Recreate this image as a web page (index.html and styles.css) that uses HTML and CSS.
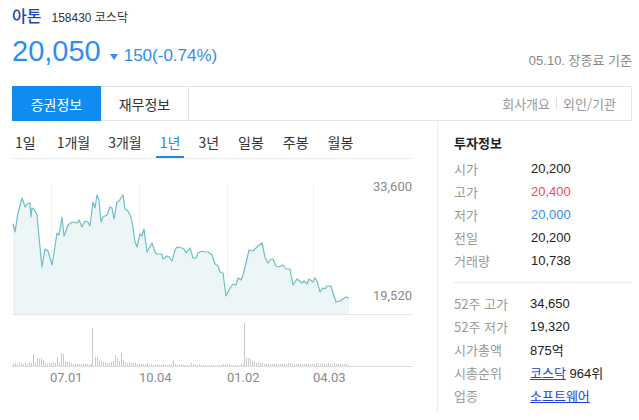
FILE: index.html
```html
<!DOCTYPE html>
<html lang="ko">
<head>
<meta charset="utf-8">
<link rel="stylesheet" href="styles.css">
</head>
<body>
<div class="wrap">
  <div class="head">
    <span class="name">아톤</span>
    <span class="code">158430 코스닥</span>
  </div>
  <div class="price-row">
    <span class="price">20,050</span>
    <svg class="tri" width="8" height="6" viewBox="0 0 8 6"><path d="M0 0H8L4 6Z" fill="#2f8df3"/></svg>
    <span class="change">150(-0.74%)</span>
    <span class="asof">05.10. 장종료 기준</span>
  </div>
  <div class="tabs">
    <div class="tab on">증권정보</div>
    <div class="tab">재무정보</div>
    <div class="tab-links"><span>회사개요</span><span class="sep"></span><span>외인/기관</span></div>
  </div>
  <div class="body">
    <div class="chart-col">
      <div class="periods">
        <span class="p">1일</span>
        <span class="p">1개월</span>
        <span class="p">3개월</span>
        <span class="p on">1년</span>
        <span class="p">3년</span>
        <span class="p">일봉</span>
        <span class="p">주봉</span>
        <span class="p">월봉</span>
      </div>
      <svg class="chart" width="425" height="253" viewBox="12 159 425 253">
        <g stroke="#f2f2f2" stroke-width="1">
          <path d="M51.5 184V314M139.5 184V314M227.5 184V314M313.5 184V314"/>
        </g>
        <path fill="#edf6f6" d="M13 224L15 232L18 213L22 198L25 207L27 204L30 203L31 217L32 208L34 209L37 215L39 237L42 267L45 249L48 251L52 265L54 253L57 233L59 235L62 217L64 236L68 225L72 222L77 223L79 220L82 227L85 221L88 222L90 226L93 202L95 208L97 195L99 200L101 222L103 217L107 215L110 207L112 208L114 219L117 202L119 201L121 198L123 195L125 209L128 211L131 217L133 228L135 242L137 247L140 234L142 236L144 229L147 252L152 243L155 252L157 254L162 254L163 259L167 256L169 257L172 261L175 250L177 247L182 248L184 249L186 253L190 248L193 258L196 258L198 253L202 251L205 252L208 252L212 255L215 264L218 266L220 272L223 273L226 296L230 288L233 284L236 285L238 278L241 280L243 275L246 263L249 250L253 251L256 248L258 246L262 243L265 257L268 263L271 259L273 259L276 266L279 267L283 265L286 269L290 269L293 285L297 279L302 283L304 281L307 284L309 279L313 282L315 278L317 281L320 292L323 288L325 289L327 286L331 286L333 293L336 302L340 301L343 299L346 297L349 298L349 314L13 314Z"/>
        <path fill="none" stroke="#6fbdc7" stroke-width="1.2" stroke-linejoin="round" d="M13 224L15 232L18 213L22 198L25 207L27 204L30 203L31 217L32 208L34 209L37 215L39 237L42 267L45 249L48 251L52 265L54 253L57 233L59 235L62 217L64 236L68 225L72 222L77 223L79 220L82 227L85 221L88 222L90 226L93 202L95 208L97 195L99 200L101 222L103 217L107 215L110 207L112 208L114 219L117 202L119 201L121 198L123 195L125 209L128 211L131 217L133 228L135 242L137 247L140 234L142 236L144 229L147 252L152 243L155 252L157 254L162 254L163 259L167 256L169 257L172 261L175 250L177 247L182 248L184 249L186 253L190 248L193 258L196 258L198 253L202 251L205 252L208 252L212 255L215 264L218 266L220 272L223 273L226 296L230 288L233 284L236 285L238 278L241 280L243 275L246 263L249 250L253 251L256 248L258 246L262 243L265 257L268 263L271 259L273 259L276 266L279 267L283 265L286 269L290 269L293 285L297 279L302 283L304 281L307 284L309 279L313 282L315 278L317 281L320 292L323 288L325 289L327 286L331 286L333 293L336 302L340 301L343 299L346 297L349 298"/>
        <path stroke="#e6e6e6" stroke-width="1" d="M13 314.5H413"/>
        <text class="ax" x="412" y="191" text-anchor="end">33,600</text>
        <text class="ax" x="412" y="300" text-anchor="end">19,520</text>
        <path stroke="#bdbdbd" stroke-width="0.8" fill="none" d="M13.5 366v-2M15.5 366v-3M17.5 366v-2M19.5 366v-4M21.5 366v-3M23.5 366v-2M25.5 366v-3M27.5 366v-2M29.5 366v-4M31.5 366v-3M33.5 366v-12M35.5 366v-4M37.5 366v-8M39.5 366v-7M41.5 366v-8M43.5 366v-6M45.5 366v-3M47.5 366v-2M49.5 366v-3M51.5 366v-3M53.5 366v-4M55.5 366v-3M57.5 366v-9M59.5 366v-4M61.5 366v-13M63.5 366v-12M65.5 366v-5M67.5 366v-4M69.5 366v-4M71.5 366v-3M73.5 366v-2M75.5 366v-2M77.5 366v-2M79.5 366v-2M81.5 366v-2M83.5 366v-2M85.5 366v-2M87.5 366v-2M89.5 366v-2M91.5 366v-2M92.5 366v-38M95.5 366v-9M97.5 366v-9M99.5 366v-6M101.5 366v-5M103.5 366v-4M105.5 366v-3M107.5 366v-3M109.5 366v-3M111.5 366v-4M113.5 366v-5M115.5 366v-11M117.5 366v-8M119.5 366v-5M121.5 366v-13M123.5 366v-6M125.5 366v-4M127.5 366v-3M129.5 366v-4M131.5 366v-3M133.5 366v-3M135.5 366v-3M137.5 366v-2M139.5 366v-2M141.5 366v-2M143.5 366v-2M145.5 366v-2M147.5 366v-3M149.5 366v-1M151.5 366v-2M153.5 366v-1M155.5 366v-1M157.5 366v-2M159.5 366v-1M161.5 366v-1M163.5 366v-2M165.5 366v-1M167.5 366v-1M169.5 366v-2M171.5 366v-1M173.5 366v-6M175.5 366v-2M177.5 366v-1M179.5 366v-1M181.5 366v-2M183.5 366v-1M185.5 366v-1M187.5 366v-1M189.5 366v-1M191.5 366v-3M193.5 366v-2M195.5 366v-1M197.5 366v-1M199.5 366v-2M201.5 366v-1M203.5 366v-1M205.5 366v-1M207.5 366v-1M209.5 366v-1M211.5 366v-1M213.5 366v-1M215.5 366v-1M217.5 366v-1M219.5 366v-1M221.5 366v-1M223.5 366v-2M225.5 366v-2M227.5 366v-1M229.5 366v-2M231.5 366v-1M233.5 366v-1M235.5 366v-1M237.5 366v-1M239.5 366v-1M241.5 366v-2M243.5 366v-1M244.5 366v-43M246.5 366v-8M248.5 366v-8M250.5 366v-7M252.5 366v-5M254.5 366v-4M256.5 366v-3M258.5 366v-4M260.5 366v-3M262.5 366v-3M264.5 366v-2M266.5 366v-2M268.5 366v-2M270.5 366v-2M272.5 366v-2M274.5 366v-2M276.5 366v-2M278.5 366v-2M280.5 366v-2M282.5 366v-2M284.5 366v-2M286.5 366v-2M288.5 366v-3M290.5 366v-3M292.5 366v-2M294.5 366v-2M296.5 366v-2M298.5 366v-2M300.5 366v-2M302.5 366v-2M304.5 366v-2M306.5 366v-2M308.5 366v-2M310.5 366v-2M312.5 366v-2M314.5 366v-2M316.5 366v-3M318.5 366v-3M320.5 366v-2M322.5 366v-3M324.5 366v-2M326.5 366v-2M328.5 366v-3M330.5 366v-2M332.5 366v-2M334.5 366v-3M336.5 366v-2M338.5 366v-2M340.5 366v-2M342.5 366v-2M344.5 366v-2M346.5 366v-2M348.5 366v-1"/>
        <path stroke="#dddddd" stroke-width="1" d="M12 366.5H413"/>
        <text class="ax" x="50" y="382">07.01</text>
        <text class="ax" x="139" y="382">10.04</text>
        <text class="ax" x="227" y="382">01.02</text>
        <text class="ax" x="313" y="382">04.03</text>
      </svg>
    </div>
    <div class="info">
      <div class="info-title">투자정보</div>
      <dl class="rows first">
        <div class="row"><dt>시가</dt><dd>20,200</dd></div>
        <div class="row"><dt>고가</dt><dd class="up">20,400</dd></div>
        <div class="row"><dt>저가</dt><dd class="down">20,000</dd></div>
        <div class="row"><dt>전일</dt><dd>20,200</dd></div>
        <div class="row"><dt>거래량</dt><dd>10,738</dd></div>
      </dl>
      <dl class="rows second">
        <div class="row"><dt>52주 고가</dt><dd>34,650</dd></div>
        <div class="row"><dt>52주 저가</dt><dd>19,320</dd></div>
        <div class="row"><dt>시가총액</dt><dd>875억</dd></div>
        <div class="row"><dt>시총순위</dt><dd><a class="lnk">코스닥</a> 964위</dd></div>
        <div class="row"><dt>업종</dt><dd><a class="lnk">소프트웨어</a></dd></div>
      </dl>
    </div>
  </div>
</div>
</body>
</html>
```
FILE: styles.css
```css
* { box-sizing: border-box; }
html, body { margin: 0; padding: 0; background: #fff; }
body {
  font-family: "Liberation Sans", "Noto Sans CJK KR", Arial, sans-serif;
  color: #333;
  width: 639px;
  height: 420px;
  overflow: hidden;
}
.wrap { width: 620px; margin-left: 12px; }

.head { display: flex; align-items: baseline; height: 30px; padding-top: 3px; }
.name { font-family: "Noto Sans CJK KR", sans-serif; font-size: 16px; color: #1f45b8; line-height: 24px; font-weight: 500; }
.code { font-size: 12px; color: #333; margin-left: 10px; }

.price-row { display: flex; align-items: baseline; height: 56px; padding-top: 4px; }
.price { font-size: 29px; color: #2f8df3; line-height: 34px; letter-spacing: 0; }
.tri { margin-left: 9px; align-self: flex-start; margin-top: 20px; }
.change { font-size: 17px; color: #2f8df3; margin-left: 6px; }
.asof { margin-left: auto; font-size: 13px; color: #888; position: relative; top: 4px; }

.tabs { display: flex; height: 35px; border: 1px solid #e4e4e4; }
.tab {
  width: 88px; display: flex; align-items: center; justify-content: center;
  font-family: "Noto Sans CJK KR", sans-serif; font-size: 14px; color: #333;
  border-right: 1px solid #e4e4e4;
}
.tab.on { background: #0f8bf1; color: #fff; margin: -1px 0 -1px -1px; height: 35px; width: 89px; border-right: none; }
.tab-links { margin-left: auto; display: flex; align-items: center; padding-right: 15px; font-family: "Noto Sans CJK KR", sans-serif; font-size: 13px; color: #999; }
.sep { width: 1px; height: 11px; background: #ddd; margin: 0 6px; }

.body { display: flex; }
.chart-col { width: 425px; }
.periods {
  display: flex; height: 38px; padding-top: 10px; margin-right: 24px;
  border-bottom: 1px solid #ececec;
  font-family: "Noto Sans CJK KR", sans-serif; font-size: 14px; color: #333;
}
.p { padding: 0 4px; height: 27px; line-height: 22px; margin-right: 10px; }
.p:first-child { padding-left: 3px; margin-right: 13px; }
.p:nth-child(5), .p:nth-child(6), .p:nth-child(7) { margin-right: 11px; }
.p.on { color: #1a87f0; border-bottom: 2px solid #1a87f0; }
.chart { display: block; }
.ax { font-family: Roboto, "Liberation Sans", sans-serif; font-size: 13px; fill: #8a8a8a; }

.info { width: 195px; border-left: 1px solid #ececec; padding: 12px 0 0 16px; height: 291px; }
.info-title { font-family: "Noto Sans CJK KR", sans-serif; font-size: 13px; font-weight: 700; color: #222; line-height: 20px; }
.rows { margin: 0; }
.rows.first { margin-top: 4px; }
.rows.second { margin-top: 10px; border-top: 1px solid #ececec; padding-top: 9px; margin-left: -1px; }
.row { display: flex; height: 23px; align-items: center; font-size: 13px; }
dt { width: 77px; color: #999; font-family: "Noto Sans CJK KR", sans-serif; }
.second dt { padding-left: 1px; }
dd { margin: 0; color: #222; }
.up { color: #f04a5a; }
.down { color: #2f8df3; }
.lnk { color: #1b45d4; text-decoration: underline; }
```
